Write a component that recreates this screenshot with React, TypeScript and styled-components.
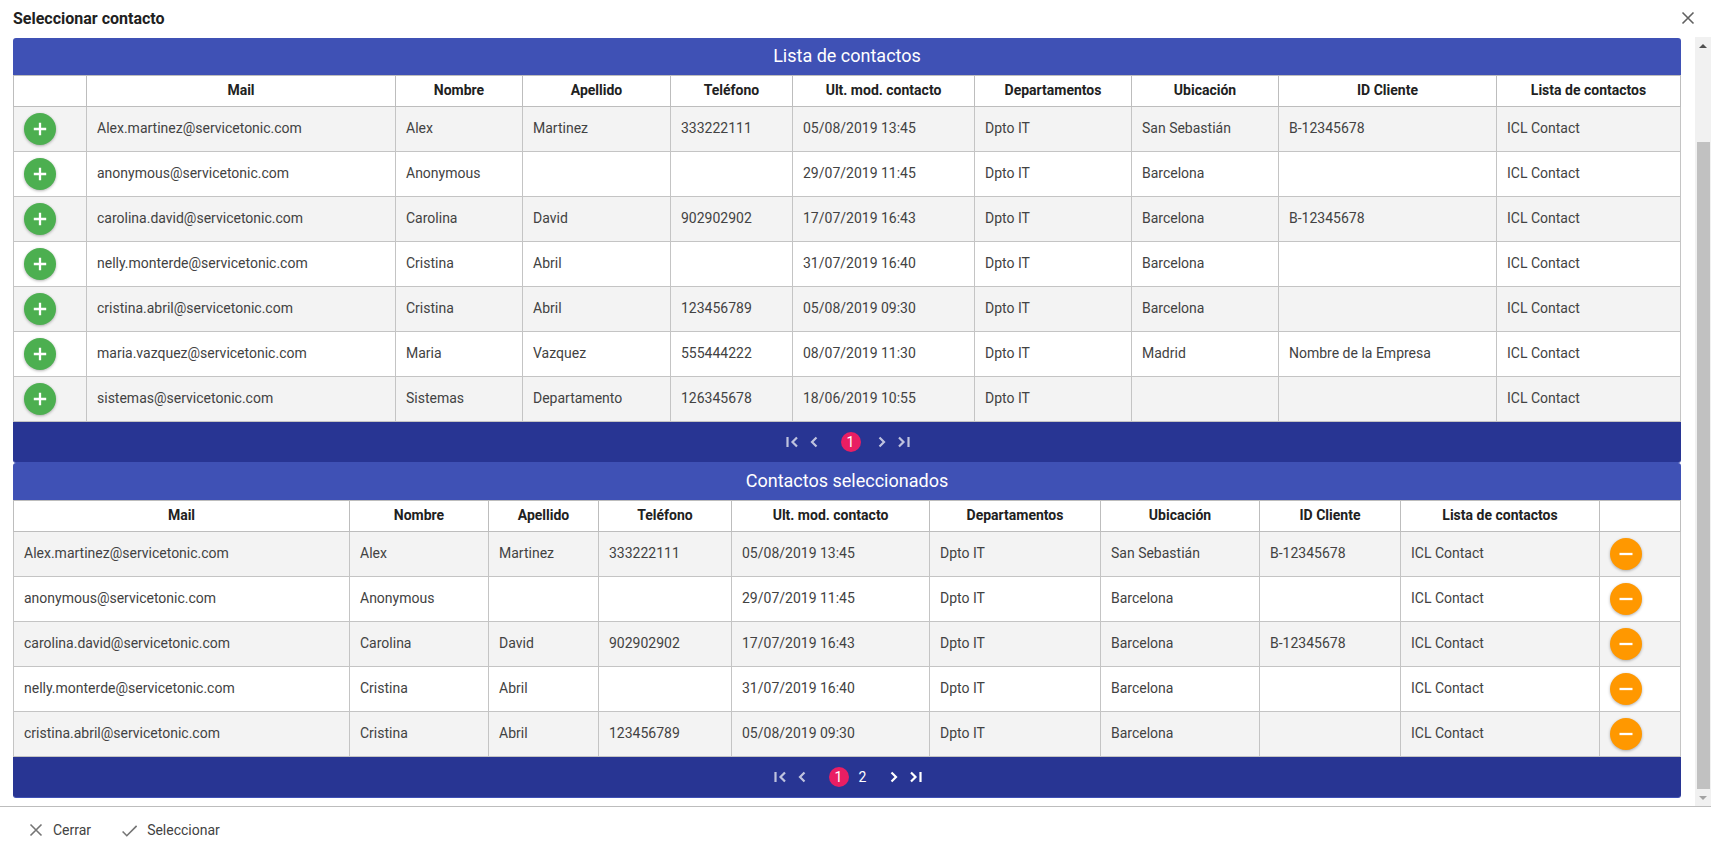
import React from "react";
import styled, { createGlobalStyle, css } from "styled-components";

const GlobalStyle = createGlobalStyle`
  *, *::before, *::after { box-sizing: border-box; }
  body {
    margin: 0;
    background: #fff;
    color: #212121;
    font-family: Roboto, "Liberation Sans", sans-serif;
    font-size: 14px;
    line-height: 20px;
  }
  button { font: inherit; border: 0; padding: 0; background: none; cursor: pointer; }
`;

const Dialog = styled.div`
  display: flex;
  flex-direction: column;
  height: 100vh;
`;

const DialogHeader = styled.header`
  display: flex;
  align-items: center;
  justify-content: space-between;
  flex: none;
  height: 37px;
  padding: 0 16px 2px 13px;
`;

const DialogTitle = styled.h1`
  margin: 0;
  padding-top: 2px;
  font-size: 16px;
  font-weight: 700;
`;

const CloseButton = styled.button`
  display: flex;
  color: #616161;
`;

const DialogBody = styled.div`
  display: flex;
  flex: 1;
  min-height: 0;
`;

const Content = styled.main`
  flex: 1;
  min-width: 0;
  overflow: hidden;
  padding: 1px 14px 8px 13px;
`;

const Panel = styled.section`
  border-bottom: 1px solid #3f51b5;
  border-radius: 3px;
  overflow: hidden;
`;

const PanelTitle = styled.h2`
  margin: 0;
  height: 37px;
  line-height: 35px;
  background: #3f51b5;
  color: #fff;
  font-size: 18px;
  font-weight: 400;
  text-align: center;
`;

const Table = styled.table`
  width: 100%;
  border-collapse: collapse;
  table-layout: fixed;
`;

const Column = styled.col<{ $width: number }>`
  width: ${(p) => p.$width}px;
`;

const HeadCell = styled.th`
  height: 31px;
  padding: 0 10px 2px;
  border: 1px solid #bdbdbd;
  font-weight: 700;
  text-align: center;
  white-space: nowrap;
`;

const BodyRow = styled.tr`
  &:nth-child(odd) { background: #f3f3f3; }
`;

const cell = css`
  height: 45px;
  border: 1px solid #c4c4c4;
`;

const Cell = styled.td`
  ${cell}
  padding: 0 10px 2px;
  color: #424242;
  white-space: nowrap;
`;

const ActionCell = styled.td`
  ${cell}
  padding: 0 10px;
`;

const RoundButton = styled.button<{ $color: string }>`
  display: flex;
  align-items: center;
  justify-content: center;
  width: 32px;
  height: 32px;
  border-radius: 50%;
  background: ${(p) => p.$color};
  color: #fff;
  box-shadow: 0 1px 3px rgba(0, 0, 0, 0.3);
`;

const Pager = styled.nav`
  display: flex;
  align-items: center;
  justify-content: center;
  height: 40px;
  padding-left: 1px;
  background: #283593;
  color: #fff;
`;

const PagerArrow = styled.button`
  display: flex;
  justify-content: center;
  width: 22px;
  color: #fff;
  &:disabled { opacity: 0.7; }
`;

const Pages = styled.div`
  display: flex;
  gap: 4px;
  margin: 0 10px 0 16px;
`;

const PageButton = styled.button<{ $current?: boolean }>`
  width: 20px;
  height: 20px;
  border-radius: 50%;
  background: ${(p) => (p.$current ? "#e91e63" : "transparent")};
  color: #fff;
  line-height: 18px;
`;

const ScrollTrack = styled.div`
  display: flex;
  flex-direction: column;
  align-items: center;
  flex: none;
  width: 16px;
  background: #f1f1f1;
`;

const ScrollArrow = styled.div`
  display: flex;
  align-items: center;
  justify-content: center;
  height: 17px;
`;

const ScrollSpace = styled.div`
  flex: 88;
`;

const ScrollThumb = styled.div`
  flex: 647;
  width: 13px;
  background: #c1c1c1;
`;

const DialogFooter = styled.footer`
  display: flex;
  align-items: center;
  gap: 30px;
  flex: none;
  height: 49px;
  padding: 0 29px 2px;
  border-top: 1px solid #bdbdbd;
`;

const FooterButton = styled.button`
  display: flex;
  align-items: center;
  gap: 10px;
  color: #424242;
  svg { color: #757575; }
`;

const CrossIcon = () => (
  <svg width="14" height="14" viewBox="0 0 14 14" fill="none" stroke="currentColor" strokeWidth="1.6" aria-hidden="true">
    <path d="M1.5 1.5l11 11M12.5 1.5l-11 11" />
  </svg>
);

const CheckIcon = () => (
  <svg width="16" height="14" viewBox="0 0 16 14" fill="none" stroke="currentColor" strokeWidth="1.6" aria-hidden="true">
    <path d="M1.6 8.500l4.200 4.200L15.600 2.900" />
  </svg>
);

const ActionIcon = ({ plus }: { plus: boolean }) => (
  <svg width="14" height="14" viewBox="0 0 14 14" fill="none" stroke="currentColor" strokeWidth="2.3" aria-hidden="true">
    <path d={plus ? "M7 .8v12.400M.8 7h12.400" : "M.5 7h13"} />
  </svg>
);

const arrowPaths = {
  first: "M1.500 1v10M11 1.500L6.500 6l4.500 4.500",
  previous: "M8.500 1.500L4 6l4.500 4.500",
  next: "M3.500 1.500L8 6l-4.500 4.500",
  last: "M1 1.500L5.500 6 1 10.500M10.500 1v10",
};

const ArrowIcon = ({ kind }: { kind: keyof typeof arrowPaths }) => (
  <svg width="12" height="12" viewBox="0 0 12 12" fill="none" stroke="currentColor" strokeWidth="2.2" aria-hidden="true">
    <path d={arrowPaths[kind]} />
  </svg>
);

const headings = ["Mail", "Nombre", "Apellido", "Teléfono", "Ult. mod. contacto", "Departamentos", "Ubicación", "ID Cliente", "Lista de contactos"];

const contacts = [
  ["Alex.martinez@servicetonic.com", "Alex", "Martinez", "333222111", "05/08/2019 13:45", "Dpto IT", "San Sebastián", "B-12345678", "ICL Contact"],
  ["anonymous@servicetonic.com", "Anonymous", "", "", "29/07/2019 11:45", "Dpto IT", "Barcelona", "", "ICL Contact"],
  ["carolina.david@servicetonic.com", "Carolina", "David", "902902902", "17/07/2019 16:43", "Dpto IT", "Barcelona", "B-12345678", "ICL Contact"],
  ["nelly.monterde@servicetonic.com", "Cristina", "Abril", "", "31/07/2019 16:40", "Dpto IT", "Barcelona", "", "ICL Contact"],
  ["cristina.abril@servicetonic.com", "Cristina", "Abril", "123456789", "05/08/2019 09:30", "Dpto IT", "Barcelona", "", "ICL Contact"],
  ["maria.vazquez@servicetonic.com", "Maria", "Vazquez", "555444222", "08/07/2019 11:30", "Dpto IT", "Madrid", "Nombre de la Empresa", "ICL Contact"],
  ["sistemas@servicetonic.com", "Sistemas", "Departamento", "126345678", "18/06/2019 10:55", "Dpto IT", "", "", "ICL Contact"],
];

interface ContactPanelProps {
  title: string;
  rows: string[][];
  widths: number[];
  action: "add" | "remove";
  pages: number;
}

function ContactPanel({ title, rows, widths, action, pages }: ContactPanelProps) {
  const adding = action === "add";
  const button = (mail: string) => (
    <ActionCell>
      <RoundButton
        type="button"
        $color={adding ? "#4caf50" : "#ff9800"}
        aria-label={`${adding ? "Añadir" : "Quitar"} ${mail}`}
      >
        <ActionIcon plus={adding} />
      </RoundButton>
    </ActionCell>
  );
  return (
    <Panel>
      <PanelTitle>{title}</PanelTitle>
      <Table>
        <colgroup>
          {widths.map((w, i) => <Column key={i} $width={w} />)}
        </colgroup>
        <thead>
          <tr>
            {adding && <HeadCell />}
            {headings.map((h) => <HeadCell key={h} scope="col">{h}</HeadCell>)}
            {!adding && <HeadCell />}
          </tr>
        </thead>
        <tbody>
          {rows.map((row) => (
            <BodyRow key={row[0]}>
              {adding && button(row[0])}
              {row.map((value, i) => <Cell key={i}>{value}</Cell>)}
              {!adding && button(row[0])}
            </BodyRow>
          ))}
        </tbody>
      </Table>
      <Pager aria-label={title}>
        <PagerArrow type="button" disabled aria-label="Primera página"><ArrowIcon kind="first" /></PagerArrow>
        <PagerArrow type="button" disabled aria-label="Página anterior"><ArrowIcon kind="previous" /></PagerArrow>
        <Pages>
          {Array.from({ length: pages }, (_, i) => (
            <PageButton key={i} type="button" $current={i === 0}>{i + 1}</PageButton>
          ))}
        </Pages>
        <PagerArrow type="button" disabled={pages === 1} aria-label="Página siguiente"><ArrowIcon kind="next" /></PagerArrow>
        <PagerArrow type="button" disabled={pages === 1} aria-label="Última página"><ArrowIcon kind="last" /></PagerArrow>
      </Pager>
    </Panel>
  );
}

export default function App() {
  return (
    <>
      <GlobalStyle />
      <Dialog role="dialog" aria-label="Seleccionar contacto">
        <DialogHeader>
          <DialogTitle>Seleccionar contacto</DialogTitle>
          <CloseButton type="button" aria-label="Cerrar ventana"><CrossIcon /></CloseButton>
        </DialogHeader>
        <DialogBody>
          <Content>
            <ContactPanel
              title="Lista de contactos"
              action="add"
              pages={1}
              rows={contacts}
              widths={[73, 309, 127, 148, 122, 182, 157, 147, 218, 184]}
            />
            <ContactPanel
              title="Contactos seleccionados"
              action="remove"
              pages={2}
              rows={contacts.slice(0, 5)}
              widths={[336, 139, 110, 133, 198, 171, 159, 141, 199, 81]}
            />
          </Content>
          <ScrollTrack aria-hidden="true">
            <ScrollArrow>
              <svg width="8" height="4" viewBox="0 0 8 4"><path d="M0 4l4-4 4 4z" fill="#505050" /></svg>
            </ScrollArrow>
            <ScrollSpace />
            <ScrollThumb />
            <ScrollArrow>
              <svg width="8" height="4" viewBox="0 0 8 4"><path d="M0 0l4 4 4-4z" fill="#a3a3a3" /></svg>
            </ScrollArrow>
          </ScrollTrack>
        </DialogBody>
        <DialogFooter>
          <FooterButton type="button"><CrossIcon />Cerrar</FooterButton>
          <FooterButton type="button"><CheckIcon />Seleccionar</FooterButton>
        </DialogFooter>
      </Dialog>
    </>
  );
}
